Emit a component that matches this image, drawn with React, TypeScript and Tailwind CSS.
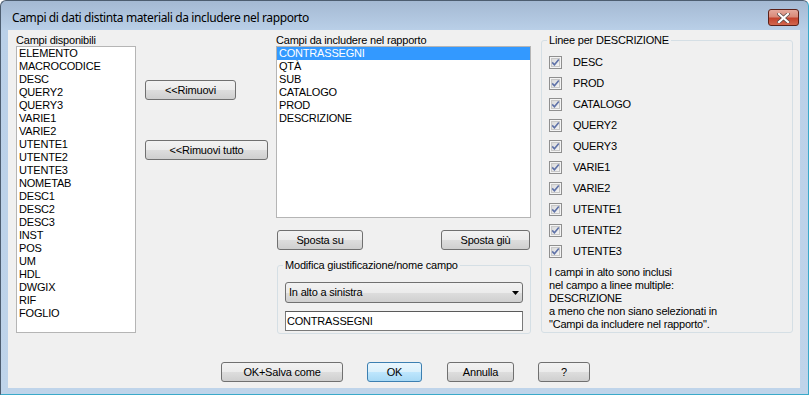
import React from "react";
import clsx from "clsx";

const available = [
  "ELEMENTO", "MACROCODICE", "DESC", "QUERY2", "QUERY3", "VARIE1", "VARIE2",
  "UTENTE1", "UTENTE2", "UTENTE3", "NOMETAB", "DESC1", "DESC2", "DESC3",
  "INST", "POS", "UM", "HDL", "DWGIX", "RIF", "FOGLIO",
];

const included = ["CONTRASSEGNI", "QTÀ", "SUB", "CATALOGO", "PROD", "DESCRIZIONE"];

const lines = [
  "DESC", "PROD", "CATALOGO", "QUERY2", "QUERY3",
  "VARIE1", "VARIE2", "UTENTE1", "UTENTE2", "UTENTE3",
];

function Btn({ children, className, primary }: { children: React.ReactNode; className?: string; primary?: boolean }) {
  return (
    <button
      className={clsx(
        "h-[20px] rounded-[3px] border text-[11px] leading-none tracking-[-0.2px] text-black",
        primary
          ? "border-[#3c7fb1] bg-[linear-gradient(to_bottom,#eaf6fd_0%,#d9f0fc_50%,#bee6fd_51%,#a7d9f5_100%)]"
          : "border-[#707070] bg-[linear-gradient(to_bottom,#f2f2f2_0%,#ebebeb_50%,#dddddd_51%,#cfcfcf_100%)]",
        className
      )}
    >
      {children}
    </button>
  );
}

function CheckBox() {
  return (
    <svg width="13" height="13" viewBox="0 0 13 13" className="shrink-0">
      <defs>
        <linearGradient id="cbg" x1="0" y1="0" x2="1" y2="1">
          <stop offset="0" stopColor="#d8d8d8" />
          <stop offset="1" stopColor="#f6f6f6" />
        </linearGradient>
      </defs>
      <rect x="0.5" y="0.5" width="12" height="12" fill="#f4f4f4" stroke="#8f8f8f" />
      <rect x="2.5" y="2.5" width="8" height="8" fill="url(#cbg)" stroke="#c8c8c8" />
      <path d="M3.2 6.4 L5.4 8.8 L9.8 3.4" fill="none" stroke="#5f72a8" strokeWidth="1.6" />
    </svg>
  );
}

function CloseButton() {
  return (
    <div className="flex h-[17px] w-[31px] items-center justify-center rounded-[3px] border border-[#5c2119] bg-[linear-gradient(to_bottom,#e5a99c_0%,#d98a79_45%,#c4432d_55%,#d2674f_100%)]">
      <svg width="13" height="10" viewBox="0 0 13 10">
        <path d="M2 1 L11 9 M11 1 L2 9" stroke="#5b4a48" strokeWidth="3.6" strokeLinecap="square" />
        <path d="M2 1 L11 9 M11 1 L2 9" stroke="#ffffff" strokeWidth="2.2" strokeLinecap="square" />
      </svg>
    </div>
  );
}

export default function App() {
  const font = { fontFamily: '"Liberation Sans", Arial, sans-serif' };

  return (
    <div className="h-[396px] w-[809px] bg-white">
      <div className="flex h-[395px] w-[809px] flex-col rounded-t-[6px] border border-[#4d5d70] border-r-[#3aa9c9] border-b-[#3aa9c9] bg-[linear-gradient(to_bottom,#a4b9d3_0px,#bad0e8_30px,#bfd4ea_100%)]">
        {/* title bar */}
        <div className="flex h-[29px] shrink-0 items-start justify-between pr-[9px]">
          <span
            className="pl-[11px] pt-[9px] text-[12px] leading-[16px] tracking-[-0.38px] text-black"
            style={{ fontFamily: '"Noto Sans", "Open Sans", sans-serif' }}
          >
            Campi di dati distinta materiali da includere nel rapporto
          </span>
          <div className="pt-[8px]">
            <CloseButton />
          </div>
        </div>

        {/* client */}
        <div className="mb-[6px] ml-[7px] mr-[8px] flex flex-1 flex-col bg-[#f0f0f0] text-[11px] tracking-[-0.2px] text-black" style={font}>
          <div className="flex pl-[8px] pt-[4px]">
            {/* available fields */}
            <div className="flex w-[120px] flex-col">
              <div className="h-[12px] leading-[12px]">Campi disponibili</div>
              <div className="h-[287px] border border-[#b5b5b5] bg-white">
                {available.map((f) => (
                  <div key={f} className="h-[13px] pl-[2px] leading-[13px]">{f}</div>
                ))}
              </div>
            </div>

            {/* remove buttons */}
            <div className="ml-[9px] flex w-[122px] flex-col items-start pt-[46px]">
              <Btn className="w-[91px]">&lt;&lt;Rimuovi</Btn>
              <Btn className="mt-[40px] w-[123px]">&lt;&lt;Rimuovi tutto</Btn>
            </div>

            {/* included fields */}
            <div className="ml-[9px] flex w-[255px] flex-col">
              <div className="h-[12px] leading-[12px]">Campi da includere nel rapporto</div>
              <div className="h-[172px] border border-[#b5b5b5] bg-white">
                {included.map((f, i) => (
                  <div
                    key={f}
                    className={clsx("h-[13px] pl-[2px] leading-[13px]", i === 0 && "bg-[#3399ff] text-white")}
                  >
                    {f}
                  </div>
                ))}
              </div>
              <div className="mt-[12px] flex justify-between px-[1px]">
                <Btn className="w-[86px]">Sposta su</Btn>
                <Btn className="w-[89px]">Sposta giù</Btn>
              </div>
              <fieldset className="ml-[1px] mt-[9px] w-[254px] rounded-[3px] border border-[#d5dfe5] px-[7px] pb-[2px]">
                <legend className="-ml-[2px] px-[2px] leading-[12px]">Modifica giustificazione/nome campo</legend>
                <div className="mt-[11px] flex h-[21px] w-[238px] items-center justify-between rounded-[3px] border border-[#707070] bg-[linear-gradient(to_bottom,#f2f2f2_0%,#ebebeb_50%,#dddddd_51%,#cfcfcf_100%)] pl-[3px] pr-[3px]">
                  <span>In alto a sinistra</span>
                  <svg width="7" height="4" viewBox="0 0 7 4">
                    <path d="M0 0 H7 L3.5 4 Z" fill="#000" />
                  </svg>
                </div>
                <div className="mt-[8px] flex h-[20px] w-[238px] items-center border border-[#7a7a7a] border-t-[#5a5a5a] bg-white pl-[1px]">
                  CONTRASSEGNI
                </div>
              </fieldset>
            </div>

            {/* multiline description group */}
            <fieldset className="ml-[10px] w-[252px] self-start rounded-[3px] border border-[#d5dfe5] pb-[1px] pl-[7px]">
              <legend className="-ml-[2px] px-[2px] leading-[12px]">Linee per DESCRIZIONE</legend>
              <div className="pt-[6px]">
                {lines.map((l) => (
                  <div key={l} className="flex h-[21px] items-center">
                    <CheckBox />
                    <span className="ml-[11px]">{l}</span>
                  </div>
                ))}
              </div>
              <div className="mt-[4px] leading-[13px]">
                I campi in alto sono inclusi
                <br />
                nel campo a linee multiple:
                <br />
                DESCRIZIONE
                <br />
                a meno che non siano selezionati in
                <br />
                "Campi da includere nel rapporto".
              </div>
            </fieldset>
          </div>

          {/* bottom buttons */}
          <div className="mt-[28px] flex gap-[24px] pl-[213px]">
            <Btn className="w-[122px]">OK+Salva come</Btn>
            <Btn primary className="w-[55px]">OK</Btn>
            <Btn className="ml-[1px] w-[67px]">Annulla</Btn>
            <Btn className="w-[52px]">?</Btn>
          </div>
        </div>
      </div>
    </div>
  );
}
